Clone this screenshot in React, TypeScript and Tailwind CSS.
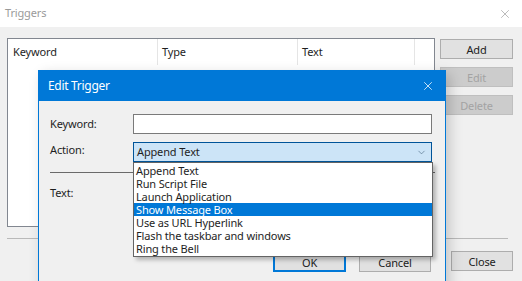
import { ChevronDown, X } from 'lucide-react';

const actions = [
  'Append Text',
  'Run Script File',
  'Launch Application',
  'Show Message Box',
  'Use as URL Hyperlink',
  'Flash the taskbar and windows',
  'Ring the Bell',
];

function WinButton({ label, width, disabled, focused }: { label: string; width: string; disabled?: boolean; focused?: boolean }) {
  const base = 'h-[20px] flex items-center justify-center text-[11px] leading-none';
  if (disabled) {
    return <div className={`${base} ${width} bg-[#cccccc] border border-[#bfbfbf] text-[#a3a3a3]`}>{label}</div>;
  }
  if (focused) {
    return <div className={`${base} ${width} bg-[#e1e1e1] border-2 border-[#0078d7] text-[#222]`}>{label}</div>;
  }
  return <div className={`${base} ${width} bg-[#e1e1e1] border border-[#adadad] text-[#222]`}>{label}</div>;
}

export default function App() {
  return (
    <div className="relative w-[522px] h-[281px] overflow-hidden bg-[#f0f0f0] font-['Noto_Sans',sans-serif] tracking-[-0.15px] text-[#1e1e1e]">
      {/* Triggers window */}
      <div className="h-[27px] bg-white flex items-center justify-between pl-[5px] pr-[10px]">
        <span className="text-[11px] text-[#9a9a9a]">Triggers</span>
        <X className="w-[14px] h-[14px] text-[#8a8a8a]" strokeWidth={1} />
      </div>

      <div className="flex pt-[11px] px-[7px]">
        <div className="w-[428px] h-[189px] bg-white border border-[#828790]">
          <div className="flex h-[26px] text-[11px]">
            <div className="w-[150px] pl-[5px] flex items-center border-r border-[#e5e5e5]">Keyword</div>
            <div className="w-[140px] pl-[4px] flex items-center border-r border-[#e5e5e5]">Type</div>
            <div className="w-[117px] pl-[4px] flex items-center border-r border-[#e5e5e5]">Text</div>
          </div>
        </div>
        <div className="ml-[5px] pt-[1px] flex flex-col gap-[8px]">
          <WinButton label="Add" width="w-[73px]" />
          <WinButton label="Edit" width="w-[73px]" disabled />
          <WinButton label="Delete" width="w-[73px]" disabled />
        </div>
      </div>

      <div className="mt-[11px] mx-[7px] w-[501px] h-px bg-[#b9b9b9]" />

      <div className="flex justify-end pt-[12px] pr-[9px]">
        <WinButton label="Close" width="w-[62px]" />
      </div>

      {/* Edit Trigger dialog */}
      <div className="absolute left-[38px] top-[70px] w-[408px] h-[240px] border border-[#0078d7] bg-[#f0f0f0] shadow-[4px_4px_12px_rgba(0,0,0,0.18)]">
        <div className="h-[30px] bg-[#0078d7] flex items-center justify-between pl-[9px] pr-[10px]">
          <span className="text-[12px] tracking-[-0.3px] text-white">Edit Trigger</span>
          <X className="w-[14px] h-[14px] text-white" strokeWidth={1.3} />
        </div>
        <div className="pl-[11px] pt-[13px] text-[11px]">
          <div className="flex items-center h-[20px]">
            <span className="w-[83px]">Keyword:</span>
            <div className="w-[299px] h-[20px] bg-white border border-[#7a7a7a]" />
          </div>
          <div className="flex items-center h-[20px] mt-[8px]">
            <span className="w-[83px] -mt-[4px]">Action:</span>
            <div className="w-[299px] h-[20px] bg-[#cce4f7] border border-[#005499] flex items-center justify-between pl-[3px] pr-[4px]">
              <span>Append Text</span>
              <ChevronDown className="w-[11px] h-[11px] text-[#4d6a85]" strokeWidth={1.4} />
            </div>
          </div>
          <div className="mt-[10px] w-[385px] h-px bg-[#6a6a6a]" />
          <div className="mt-[12px] h-[16px] flex items-center">Text:</div>
          <div className="mt-[51px] flex gap-[13px] pl-[223px]">
            <WinButton label="OK" width="w-[73px]" focused />
            <WinButton label="Cancel" width="w-[72px]" />
          </div>
        </div>
      </div>

      {/* Open combo list */}
      <div className="absolute left-[133px] top-[162px] w-[300px] bg-white border border-[#646464] py-[1px] shadow-[3px_3px_4px_rgba(0,0,0,0.25)] text-[11px]">
        {actions.map((a, i) => (
          <div
            key={a}
            className={`h-[13px] leading-[13px] pl-[2px] ${i === 3 ? 'bg-[#0078d7] text-white' : ''}`}
          >
            {a}
          </div>
        ))}
      </div>
    </div>
  );
}
